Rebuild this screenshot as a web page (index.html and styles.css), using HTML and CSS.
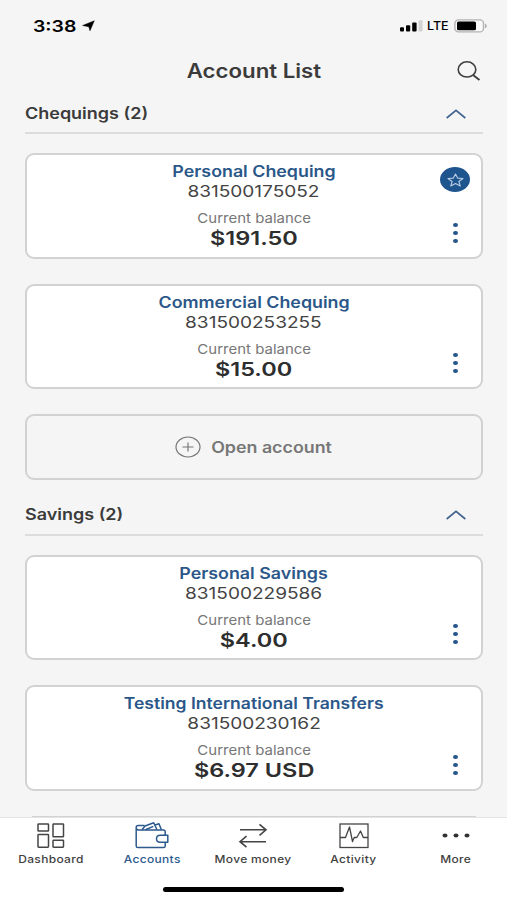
FILE: index.html
```html
<!DOCTYPE html>
<html lang="en">
<head>
<meta charset="utf-8">
<title>Account List</title>
<link rel="stylesheet" href="styles.css">
</head>
<body>
<div class="screen">
  <header class="status">
    <div class="clock"><span class="wide time">3:38</span>
      <svg width="13" height="12" viewBox="0 0 13 12"><path d="M12.3.8 8 10.8 6.8 6.8.6 5.5Z" fill="#000" stroke="#000" stroke-width=".5" stroke-linejoin="round"/></svg>
    </div>
    <div class="signal">
      <svg width="23" height="12" viewBox="0 0 23 12"><g fill="#000"><rect y="7.2" width="4" height="4.3" rx="1"/><rect x="6" y="5.2" width="4.2" height="6.3" rx="1"/><rect x="12.2" y="2.4" width="4.4" height="9.1" rx="1"/></g><rect x="18.6" y=".2" width="4" height="11.3" rx="1" fill="#d2d2d2"/></svg>
      <span class="wide lte">LTE</span>
      <svg width="33" height="14" viewBox="0 0 33 14"><rect x=".9" y=".9" width="28.6" height="12" rx="3.5" fill="#fafafa" stroke="#b2b2b2" stroke-width="1.4"/><rect x="3" y="2.5" width="19" height="8.8" rx="1.6" fill="#000"/><path d="M31 4.6q1.7.6 1.7 2.3T31 9.2Z" fill="#aaa"/></svg>
    </div>
  </header>
  <div class="topbar">
    <h1><span class="wide">Account List</span></h1>
    <svg class="search" width="24" height="20" viewBox="0 0 24 20" fill="none" stroke="#3f3f3f" stroke-width="1.6"><ellipse cx="10" cy="8.4" rx="8.8" ry="7.6"/><path d="m16 14 6.5 5" stroke-width="1.9"/></svg>
  </div>
  <main>
    <section>
      <div class="group"><h2><span class="wide">Chequings (2)</span></h2><svg width="20" height="10" viewBox="0 0 20 10"><path d="M.7 9 10 1.4 19.3 9" fill="none" stroke="#41658f" stroke-width="1.7"/></svg></div>
      <div class="cards">
        <article class="card">
          <h3><span class="wide">Personal Chequing</span></h3><p class="number"><span class="wide">831500175052</span></p><p class="label"><span class="wide">Current balance</span></p><p class="amount"><span class="wide">$191.50</span></p>
          <div class="star"><svg width="17" height="14" viewBox="0 0 17 14"><path d="M8.5 1 10.6 5.1 16 5.5 11.9 8.5 13.2 13 8.5 10.6 3.8 13 5.1 8.5 1 5.5 6.4 5.1Z" fill="none" stroke="#b9cee4" stroke-width="1.1" stroke-linejoin="round"/></svg></div>
          <div class="dots"><i></i><i></i><i></i></div>
        </article>
        <article class="card">
          <h3><span class="wide">Commercial Chequing</span></h3><p class="number"><span class="wide">831500253255</span></p><p class="label"><span class="wide">Current balance</span></p><p class="amount"><span class="wide">$15.00</span></p>
          <div class="dots"><i></i><i></i><i></i></div>
        </article>
        <div class="open">
          <svg width="26" height="22" viewBox="0 0 26 22" fill="none" stroke="#777" stroke-width="1.2"><ellipse cx="13" cy="11" rx="12" ry="10"/><path d="M7.5 11h11M13 6.4v9.2"/></svg>
          <span class="wide">Open account</span>
        </div>
      </div>
    </section>
    <section class="savings">
      <div class="group"><h2><span class="wide">Savings (2)</span></h2><svg width="20" height="10" viewBox="0 0 20 10"><path d="M.7 9 10 1.4 19.3 9" fill="none" stroke="#41658f" stroke-width="1.7"/></svg></div>
      <div class="cards">
        <article class="card">
          <h3><span class="wide">Personal Savings</span></h3><p class="number"><span class="wide">831500229586</span></p><p class="label"><span class="wide">Current balance</span></p><p class="amount"><span class="wide">$4.00</span></p>
          <div class="dots"><i></i><i></i><i></i></div>
        </article>
        <article class="card">
          <h3><span class="wide long">Testing International Transfers</span></h3><p class="number"><span class="wide">831500230162</span></p><p class="label"><span class="wide">Current balance</span></p><p class="amount"><span class="wide">$6.97 USD</span></p>
          <div class="dots"><i></i><i></i><i></i></div>
        </article>
        <div class="next"></div>
      </div>
    </section>
  </main>
  <footer>
    <nav>
      <a><svg width="30" height="26" viewBox="0 0 30 26" fill="none" stroke="#454545" stroke-width="1.5"><rect x="2" y="1" width="10.5" height="7" rx=".6"/><rect x="2" y="11.4" width="10.5" height="12.8" rx=".6"/><rect x="17" y="1" width="10.5" height="12.8" rx=".6"/><rect x="17" y="17.2" width="10.5" height="7" rx=".6"/></svg><span class="wide">Dashboard</span></a>
      <a class="active"><svg width="34" height="28" viewBox="0 0 34 28" fill="none" stroke="#2d598d" stroke-width="1.5" stroke-linejoin="round"><path d="M9.5 3.4H3.2Q1.2 3.4 1.2 5.2V24Q1.2 25.6 3 25.6H28.5Q30.2 25.6 30.2 24V20.3M30.2 13.3V9.8Q30.2 8 28.5 8H3.5Q1.2 8 1.2 5.5"/><path d="M7 7.8 10 4 18.7.8 22 7.8M10.5 7.8 18.3 4.4M20 3 24 1.8 26.4 7.8"/><path d="M32.8 13.3H25.2Q21.5 13.3 21.5 16.8T25.2 20.3H32.8Z"/></svg><span class="wide">Accounts</span></a>
      <a><svg width="30" height="26" viewBox="0 0 30 26" fill="none" stroke="#454545" stroke-width="1.6"><path d="M2 6.8H28M21.5 1.3 28 6.8 21.5 12.3M28 18.7H2M8.5 13.2 2 18.7 8.5 24.2"/></svg><span class="wide">Move money</span></a>
      <a><svg width="30" height="26" viewBox="0 0 30 26" fill="none" stroke="#454545" stroke-width="1.3"><rect x="1" y="1" width="28" height="23.5"/><path d="M1 14.5H6.5L10.5 4 13.5 18.5 15.2 14.5H17.8L21.5 8 24.3 14.5H29" stroke-linejoin="round"/></svg><span class="wide">Activity</span></a>
      <a><svg width="30" height="26" viewBox="0 0 30 26" fill="#333"><ellipse cx="4" cy="12.5" rx="2.5" ry="2.1"/><ellipse cx="15" cy="12.5" rx="2.5" ry="2.1"/><ellipse cx="26" cy="12.5" rx="2.5" ry="2.1"/></svg><span class="wide">More</span></a>
    </nav>
    <div class="home"></div>
  </footer>
</div>
</body>
</html>
```
FILE: styles.css
```css
* { box-sizing: border-box; margin: 0; padding: 0; }
body { background: #f5f5f5; font-family: Inter, "Liberation Sans", sans-serif; }
.screen { width: 507px; height: 900px; overflow: hidden; display: flex; flex-direction: column; background: #f5f5f5; color: #3b3b3b; }
svg { display: block; flex: none; }
.wide { display: inline-block; transform: scaleX(1.15); white-space: nowrap; }
.status { height: 50px; padding: 14px 20px 12px 33.3px; display: flex; justify-content: space-between; align-items: center; color: #000; }
.clock, .signal { display: flex; align-items: center; }
.clock { gap: 13px; }
.time, .lte, h2 .wide { transform-origin: left; }
.time { font-size: 15.8px; font-weight: 600; transform: scaleX(1.23); }
.lte { font-size: 11.8px; font-weight: 500; margin: 0 6.5px 0 4px; transform: scaleX(1.06); }
.topbar { height: 42px; position: relative; display: flex; justify-content: center; align-items: center; padding-bottom: 1px; }
h1 { font-size: 19.5px; line-height: 24px; font-weight: 600; }
h1 .wide { transform: scaleX(1.14); }
.search { position: absolute; right: 26.5px; top: 10.5px; }
main { flex: 1; min-height: 0; overflow: hidden; padding: 0 24.5px 0 25px; }
.group { height: 42px; padding: 3px 17px 0 0; border-bottom: 2px solid #dcdcdc; display: flex; justify-content: space-between; align-items: center; }
h2 { font-size: 15.5px; line-height: 20px; font-weight: 600; }
h2 .wide { transform: scaleX(1.16); }
.cards { display: flex; flex-direction: column; gap: 25px; padding-top: 19px; }
.card { position: relative; height: 105.5px; border: 2px solid #d2d2d2; border-radius: 9px; background: #fff; text-align: center; padding-top: 7px; }
h3 { font-size: 15.5px; line-height: 20px; font-weight: 600; color: #2b5789; }
h3 .long { transform: scaleX(1.133); }
.number { font-size: 16px; line-height: 19px; color: #444; }
.number .wide { transform: scaleX(1.19); }
.label { font-size: 13.5px; line-height: 18px; margin-top: 8px; color: #777; }
.label .wide { transform: scaleX(1.11); }
.amount { font-size: 19.2px; line-height: 23px; font-weight: 600; color: #2e2e2e; }
.amount .wide { transform: scaleX(1.225); }
.star { position: absolute; right: 10.5px; top: 12px; width: 30px; height: 25px; border-radius: 50%; background: #1f558f; display: grid; place-items: center; }
.dots { position: absolute; right: 22.5px; top: 67.5px; display: flex; flex-direction: column; gap: 3.8px; }
.dots i { width: 5px; height: 4.3px; border-radius: 50%; background: #28568a; }
.open { height: 65.5px; border: 2px solid #d2d2d2; border-radius: 9px; display: flex; align-items: center; justify-content: center; gap: 18px; padding: 1px 8px 0 0; font-size: 15.5px; font-weight: 600; color: #777; }
.savings { padding-top: 14px; }
.next { height: 20px; margin: 0 7px; border-top: 2px solid #d2d2d2; }
footer { height: 83.5px; background: #fff; border-top: 1px solid #e4e4e4; padding-top: 4.5px; }
nav { display: flex; }
nav a { flex: 1; display: flex; flex-direction: column; align-items: center; font-size: 10.6px; line-height: 14px; font-weight: 500; color: #3f3f3f; }
nav a:nth-child(n+4) { padding-right: 1px; }
nav a:first-child { padding-left: 1px; }
nav svg { height: 28px; }
nav .wide { margin-top: 2.5px; letter-spacing: .3px; transform: scaleX(1.13); }
nav .active { color: #2d598d; }
.home { width: 181px; height: 5px; border-radius: 3px; background: #000; margin: 20.5px auto 0; }
```
